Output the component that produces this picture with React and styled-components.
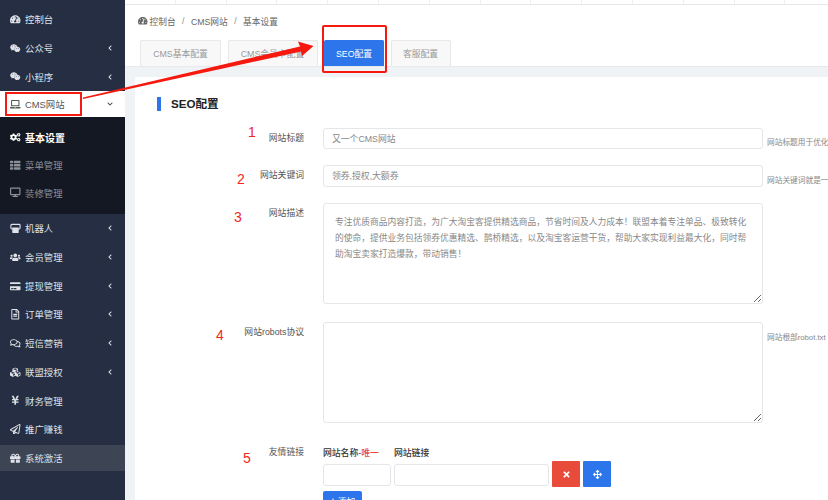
import React from 'react';
import styled, { createGlobalStyle } from 'styled-components';
import {
  FaTachometerAlt, FaWeixin, FaLaptop, FaCogs, FaThList, FaDesktop, FaUsers,
  FaCreditCard, FaRegFileAlt, FaRegComments, FaCubes, FaYenSign, FaRegPaperPlane, FaGift,
  FaChevronLeft, FaChevronDown, FaTimes, FaArrowsAlt, FaPlus,
} from 'react-icons/fa';

const RobotIcon = () => (
  <svg viewBox="0 0 12 12" width="11" height="11">
    <path d="M2 1.5h8a1 1 0 0 1 1 1v3a1 1 0 0 1-1 1H2a1 1 0 0 1-1-1v-3a1 1 0 0 1 1-1z" fill="none" stroke="currentColor" strokeWidth="1.2" />
    <path d="M2.5 5h7v5a1 1 0 0 1-1 1h-5a1 1 0 0 1-1-1z" fill="currentColor" />
  </svg>
);

const menuTop = [
  { name: '控制台', Icon: FaTachometerAlt },
  { name: '公众号', Icon: FaWeixin, arrow: true },
  { name: '小程序', Icon: FaWeixin, arrow: true },
];

const subMenu = [
  { name: '基本设置', Icon: FaCogs, active: true },
  { name: '菜单管理', Icon: FaThList },
  { name: '装修管理', Icon: FaDesktop },
];

const menuBottom = [
  { name: '机器人', Icon: RobotIcon, arrow: true },
  { name: '会员管理', Icon: FaUsers, arrow: true },
  { name: '提现管理', Icon: FaCreditCard, arrow: true },
  { name: '订单管理', Icon: FaRegFileAlt, arrow: true },
  { name: '短信营销', Icon: FaRegComments, arrow: true },
  { name: '联盟授权', Icon: FaCubes, arrow: true },
  { name: '财务管理', Icon: FaYenSign },
  { name: '推广赚钱', Icon: FaRegPaperPlane },
  { name: '系统激活', Icon: FaGift, current: true },
];

const tabs = [
  { name: 'CMS基本配置', width: 81 },
  { name: 'CMS会员卡配置', width: 90 },
  { name: 'SEO配置', width: 60, active: true },
  { name: '客服配置', width: 60 },
];

const stripCells = [0, 1, 2, 3, 4, 5, 6, 7, 8, 9, 10, 11, 12, 13];

const description = '专注优质商品内容打造，为广大淘宝客提供精选商品，节省时间及人力成本！联盟本着专注单品、极致转化的使命，提供业务包括领券优惠精选、鹊桥精选，以及淘宝客运营干货，帮助大家实现利益最大化，同时帮助淘宝卖家打造爆款，带动销售！';

const App = () => {
  return (
    <Page>
      <GlobalStyle />

      <Sidebar>
        { menuTop.map( item => (
          <MenuItem key={item.name}>
            <MenuIcon><item.Icon /></MenuIcon>
            <span>{ item.name }</span>
            { item.arrow && <MenuArrow><FaChevronLeft /></MenuArrow> }
          </MenuItem>
        )) }

        <OpenItem>
          <MenuIcon><FaLaptop /></MenuIcon>
          <span>CMS网站</span>
          <MenuArrow><FaChevronDown /></MenuArrow>
        </OpenItem>

        <SubMenu>
          { subMenu.map( item => (
            <SubItem key={item.name} $active={item.active}>
              <MenuIcon><item.Icon /></MenuIcon>
              <span>{ item.name }</span>
            </SubItem>
          )) }
        </SubMenu>

        { menuBottom.map( item => (
          <MenuItem key={item.name} $current={item.current}>
            <MenuIcon><item.Icon /></MenuIcon>
            <span>{ item.name }</span>
            { item.arrow && <MenuArrow><FaChevronLeft /></MenuArrow> }
          </MenuItem>
        )) }
      </Sidebar>

      <Main>
        <TopStrip>
          { stripCells.map( cell => <StripCell key={cell} /> ) }
        </TopStrip>

        <Header>
          <Breadcrumb>
            <FaTachometerAlt />
            <span>控制台</span>
            <Slash>/</Slash>
            <span>CMS网站</span>
            <Slash>/</Slash>
            <span>基本设置</span>
          </Breadcrumb>

          <Tabs>
            { tabs.map( tab => (
              <Tab key={tab.name} $width={tab.width} $active={tab.active}>{ tab.name }</Tab>
            )) }
          </Tabs>
        </Header>

        <Body>
          <Card>
            <CardTitle>SEO配置</CardTitle>

            <FormRow>
              <Label>网站标题</Label>
              <Input defaultValue="又一个CMS网站" />
              <Help>网站标题用于优化</Help>
            </FormRow>

            <FormRow>
              <Label>网站关键词</Label>
              <Input defaultValue="领券,授权,大额券" />
              <Help>网站关键词就是一</Help>
            </FormRow>

            <FormRow $gap={18.5}>
              <Label>网站描述</Label>
              <TextArea defaultValue={description} />
            </FormRow>

            <FormRow>
              <Label>网站robots协议</Label>
              <TextArea />
              <Help $top>网站根部robot.txt</Help>
            </FormRow>

            <LinkRow>
              <Label>友情链接</Label>
              <div>
                <LinkHead>
                  <NameHead>网站名称-<em>唯一</em></NameHead>
                  <span>网站链接</span>
                </LinkHead>
                <LinkInputs>
                  <NameInput />
                  <UrlInput />
                  <SquareButton $color="#e94b3b"><FaTimes /></SquareButton>
                  <SquareButton $color="#2c75ea"><FaArrowsAlt /></SquareButton>
                </LinkInputs>
                <AddButton><FaPlus />添加</AddButton>
              </div>
            </LinkRow>
          </Card>
        </Body>
      </Main>

      <Notes>
        <Note style={{ left: 248, top: 123 }}>1</Note>
        <Note style={{ left: 237, top: 170 }}>2</Note>
        <Note style={{ left: 234, top: 208 }}>3</Note>
        <Note style={{ left: 216, top: 326 }}>4</Note>
        <Note style={{ left: 243, top: 449 }}>5</Note>
        <CmsBox />
        <TabBox />
        <ArrowSvg viewBox="0 0 828 500" width="828" height="500">
          <polygon points="83,97.5 300,46.5 298,41.5 313.5,46 302,56 301,51.5 83,99" fill="#f5190f" />
        </ArrowSvg>
      </Notes>
    </Page>
  )
}

export default App;


const GlobalStyle = createGlobalStyle`
  html, body {
    margin: 0;
    padding: 0;
    background: #f0f3f6;
  }
  * {
    box-sizing: border-box;
  }
`;

const Page = styled.div`
  position: relative;
  display: flex;
  width: 828px;
  height: 500px;
  overflow: hidden;
  font-family: "Liberation Sans", "Noto Sans CJK SC", sans-serif;
  font-size: 9px;
`;

const Sidebar = styled.div`
  flex: 0 0 125px;
  padding-top: 5px;
  background: #252e42;
`;

const MenuItem = styled.div`
  display: flex;
  align-items: center;
  height: ${props => props.$current ? '26px' : '28.7px'};
  margin-top: ${props => props.$current ? '1.5px' : '0'};
  padding: 0 12px 0 10px;
  color: #dfe2e8;
  font-size: 9.4px;
  background: ${props => props.$current ? '#3d4454' : 'transparent'};
`;

const OpenItem = styled(MenuItem)`
  height: 26px;
  background: #fff;
  color: #555;
`;

const MenuIcon = styled.span`
  display: flex;
  justify-content: center;
  flex: 0 0 11px;
  margin-right: 4px;
  font-size: 10.5px;
`;

const MenuArrow = styled.span`
  display: flex;
  margin-left: auto;
  font-size: 6px;
`;

const SubMenu = styled.div`
  height: 97px;
  padding-top: 6.5px;
  background: #141822;
`;

const SubItem = styled.div`
  display: flex;
  align-items: center;
  height: 27.6px;
  padding: 0 12px 0 10px;
  font-size: ${props => props.$active ? '10px' : '9.4px'};
  font-weight: ${props => props.$active ? 'bold' : 'normal'};
  color: ${props => props.$active ? '#fff' : '#8b8f98'};
`;

const Main = styled.div`
  display: flex;
  flex-direction: column;
  flex: 1;
  min-width: 0;
`;

const TopStrip = styled.div`
  display: flex;
  flex: 0 0 5px;
  background: #fff;
  border-bottom: 1px solid #e8e8e8;
  overflow: hidden;
`;

const StripCell = styled.div`
  flex: 0 0 50.8px;
  border-right: 1px solid #eee;
`;

const Header = styled.div`
  flex: 0 0 62px;
  padding-left: 13px;
  background: #fff;
  border-bottom: 1px solid #e6e9ee;
`;

const Breadcrumb = styled.div`
  display: flex;
  align-items: center;
  height: 35px;
  padding-bottom: 3px;
  color: #666;
  font-size: 8.7px;

  svg {
    margin-right: 2px;
    font-size: 9.5px;
  }
`;

const Slash = styled.span`
  margin: 0 6.5px;
  color: #888;
`;

const Tabs = styled.div`
  display: flex;
  align-items: flex-end;
  gap: 6.5px;
  height: 26px;
  margin-left: 2px;
`;

const Tab = styled.div`
  display: flex;
  align-items: center;
  justify-content: center;
  flex: 0 0 ${props => props.$width}px;
  height: 26px;
  border: 1px solid ${props => props.$active ? '#2c75ea' : '#e8e8e8'};
  border-bottom: none;
  border-radius: 2px 2px 0 0;
  background: ${props => props.$active ? '#2c75ea' : '#f8f8f8'};
  color: ${props => props.$active ? '#fff' : '#999'};
  font-size: 8.8px;
  white-space: nowrap;
`;

const Body = styled.div`
  flex: 1;
  min-height: 0;
  padding: 10px 0 0 10px;
  background: #f0f3f6;
`;

const Card = styled.div`
  width: 760px;
  height: 500px;
  padding: 20px 0 0 22px;
  background: #fff;
  border-radius: 2px;
`;

const CardTitle = styled.div`
  height: 14px;
  margin-bottom: 16.5px;
  padding-left: 10px;
  border-left: 4px solid #2c75ea;
  color: #222;
  font-size: 11.6px;
  font-weight: bold;
  line-height: 14px;
`;

const FormRow = styled.div`
  display: flex;
  align-items: flex-start;
  margin-bottom: ${props => props.$gap || 16}px;
`;

const LinkRow = styled(FormRow)`
  margin-top: 19px;
`;

const Label = styled.div`
  flex: 0 0 147px;
  margin-right: 19px;
  padding-top: 4px;
  color: #555;
  font-size: 8.8px;
  line-height: 12px;
  text-align: right;
`;

const fieldStyle = `
  border: 1px solid #e5e6e9;
  border-radius: 3px;
  background: #fff;
  color: #888;
  font-family: inherit;
  font-size: 8.8px;
  outline: none;
`;

const Input = styled.input`
  ${fieldStyle}
  flex: 0 0 440px;
  height: 21.6px;
  padding: 0 8px;
`;

const TextArea = styled.textarea`
  ${fieldStyle}
  flex: 0 0 440px;
  height: 101px;
  padding: 10px 10px 8px 11px;
  line-height: 16px;
  font-size: 8.76px;
`;

const Help = styled.div`
  margin-left: 4px;
  padding-top: ${props => props.$top ? '9px' : '8.5px'};
  color: #888;
  font-size: 7.7px;
  white-space: nowrap;
`;

const LinkHead = styled.div`
  display: flex;
  height: 19px;
  padding-top: 4px;
  color: #333;
  font-size: 8.8px;
  font-weight: 500;
`;

const NameHead = styled.span`
  width: 71px;

  em {
    color: #e94b3b;
    font-style: normal;
  }
`;

const LinkInputs = styled.div`
  display: flex;
  align-items: flex-start;
  gap: 3px;
`;

const NameInput = styled.input`
  ${fieldStyle}
  width: 68px;
  height: 22px;
  margin-top: 3px;
`;

const UrlInput = styled(NameInput)`
  width: 155px;
`;

const SquareButton = styled.button`
  display: flex;
  align-items: center;
  justify-content: center;
  width: 28px;
  height: 26px;
  padding: 0;
  border: none;
  border-radius: 1px;
  background: ${props => props.$color};
  color: #fff;
  font-size: 9px;
`;

const AddButton = styled.button`
  display: flex;
  align-items: center;
  justify-content: center;
  gap: 2px;
  width: 39px;
  height: 20px;
  margin-top: 4px;
  padding: 0;
  border: none;
  border-radius: 2px;
  background: #2c75ea;
  color: #fff;
  font-family: inherit;
  font-size: 8.8px;

  svg {
    font-size: 6px;
  }
`;

const Notes = styled.div`
  position: absolute;
  inset: 0;
  pointer-events: none;
`;

const Note = styled.span`
  position: absolute;
  color: #f0281e;
  font-size: 14px;
  line-height: 18px;
`;

const CmsBox = styled.div`
  position: absolute;
  left: 5px;
  top: 92px;
  width: 77px;
  height: 24px;
  border: 2px solid #f5190f;
`;

const TabBox = styled.div`
  position: absolute;
  left: 322px;
  top: 25px;
  width: 65px;
  height: 48px;
  border: 2px solid #f5190f;
  border-radius: 2px;
`;

const ArrowSvg = styled.svg`
  position: absolute;
  left: 0;
  top: 0;
`;
